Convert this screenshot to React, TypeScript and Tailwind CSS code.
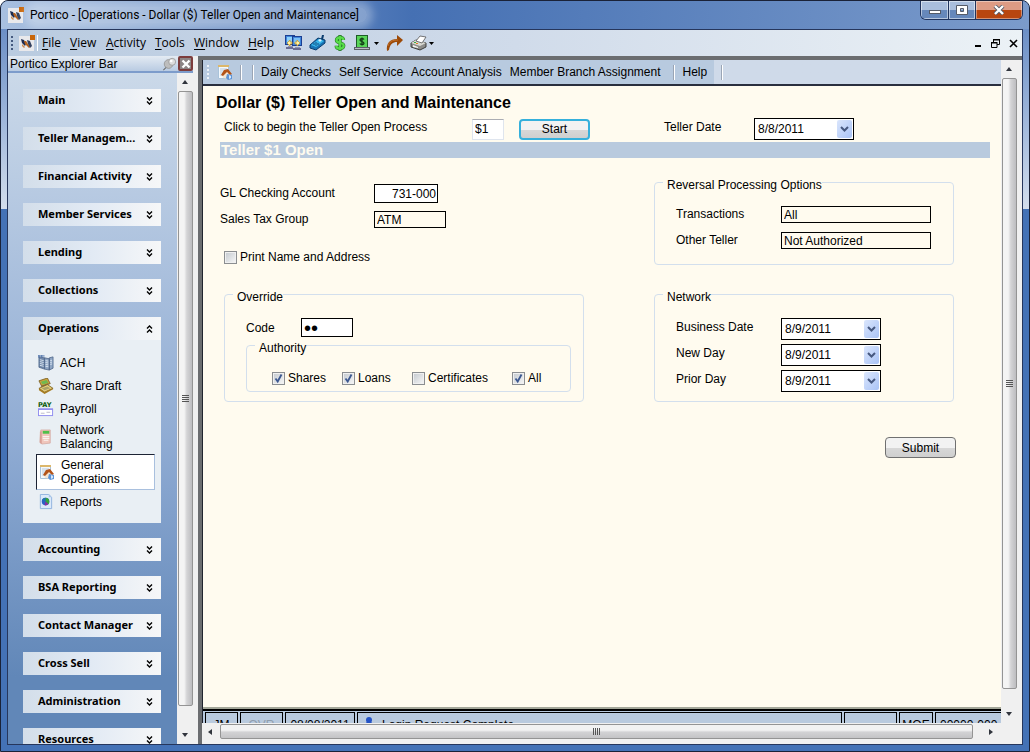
import React from 'react';

type IconProps = { className?: string };

const SECTIONS_ABOVE = ['Main', 'Teller Managem...', 'Financial Activity', 'Member Services', 'Lending', 'Collections'];
const SECTIONS_BELOW = ['Accounting', 'BSA Reporting', 'Contact Manager', 'Cross Sell', 'Administration', 'Resources'];

const LogoIcon: React.FC<IconProps> = ({ className }) => (
  <svg viewBox="0 0 16 16" className={className} aria-hidden="true">
    <rect x="0" y="1" width="15" height="15" fill="#e9e9ec" />
    <path d="M2 4l3 1 2 4-1 2-3-3z" fill="#1c2c52" />
    <path d="M5 6l2 0 4 6-1 1-4-4z" fill="#b4601c" />
    <path d="M8 5l3 1 2 5-2 2-2-4z" fill="#33415f" />
    <path d="M3 9l3 3-1 1-2-2z" fill="#c98a50" />
    <rect x="11" y="0" width="5" height="5" fill="#c8660a" />
  </svg>
);

const MonitorsIcon: React.FC<IconProps> = ({ className }) => (
  <svg viewBox="0 0 17 16" className={className} aria-hidden="true">
    <rect x="0.5" y="0.5" width="9" height="9" fill="#3f86dc" stroke="#1b3f92" />
    <rect x="2" y="2" width="6" height="5" fill="#8cd0fa" />
    <rect x="7.5" y="1.500" width="9" height="9" fill="#3f86dc" stroke="#1b3f92" />
    <rect x="9" y="3" width="6" height="5" fill="#7cc0f4" />
    <path d="M3 11h5v2H3zM10 12h5v2h-5z" fill="#8f93b5" />
    <path d="M1 12h7v2H1zM8 13h8v2H8z" fill="#6a6d94" />
    <path d="M2 8l3-3v2h2v2H5v2zM15 8l-3-3v2h-2v2h2v2z" fill="#fff3a8" stroke="#c9971e" strokeWidth="0.7" />
  </svg>
);

const PhoneIcon: React.FC<IconProps> = ({ className }) => (
  <svg viewBox="0 0 17 16" className={className} aria-hidden="true">
    <path d="M1 10l8-7 7 2v3l-9 7-6-2z" fill="#1673b4" stroke="#0b3d6e" />
    <path d="M2 10l8-6 5 2-8 6z" fill="#38b6ea" />
    <path d="M9 5l2-1 2 1-2 2z" fill="#d6f3ff" />
    <path d="M4 9l1-1 1 1-1 1zM6 10l1-1 1 1-1 1zM6 8l1-1 1 1-1 1zM8 9l1-1 1 1-1 1z" fill="#0e4a80" />
    <path d="M12 4l1-4h2l-1 5z" fill="#0b3d6e" />
  </svg>
);

const DollarIcon: React.FC<IconProps> = ({ className }) => (
  <svg viewBox="0 0 14 16" className={className} aria-hidden="true">
    <path
      d="M10.500 5C10.500 3 9 2.500 7 2.500S3.500 3.300 3.500 5.200 5 7.300 7 7.800s3.700 1 3.700 3-1.700 2.700-3.700 2.700-3.800-1-3.800-2.800M7 0v16"
      fill="none"
      stroke="#2a7d2c"
      strokeWidth="3.400"
    />
    <path
      d="M10.500 5C10.500 3 9 2.500 7 2.500S3.500 3.300 3.500 5.200 5 7.300 7 7.800s3.700 1 3.700 3-1.700 2.700-3.700 2.700-3.800-1-3.800-2.800M7 1v14"
      fill="none"
      stroke="#57dc48"
      strokeWidth="2.200"
    />
  </svg>
);

const CashIcon: React.FC<IconProps> = ({ className }) => (
  <svg viewBox="0 0 16 16" className={className} aria-hidden="true">
    <rect x="2" y="0" width="12" height="13" fill="#1d5c26" />
    <rect x="3" y="1" width="10" height="11" fill="#59d458" />
    <path d="M10 4.500C9.500 3.500 6 3 6 5c0 2 4 1 4 3.200 0 1.800-3.500 1.500-4.200.3M8 2.500v8" fill="none" stroke="#0d3312" strokeWidth="1.200" />
    <path d="M0 12h16v3H0z" fill="#5b5f66" />
    <path d="M1 13h14v1H1z" fill="#b9bdc4" />
  </svg>
);

const ForwardIcon: React.FC<IconProps> = ({ className }) => (
  <svg viewBox="0 0 17 16" className={className} aria-hidden="true">
    <path d="M1 16C0 8 4 4 11 4V0l6 5-6 6V7C7 7 4 9 3 15z" fill="#9c4a08" />
    <path d="M2 11c1-4 4-6 10-6" fill="none" stroke="#cd7a32" strokeWidth="0.800" />
  </svg>
);

const PrinterIcon: React.FC<IconProps> = ({ className }) => (
  <svg viewBox="0 0 17 16" className={className} aria-hidden="true">
    <path d="M1 8l5-3 10 3v4l-6 3-9-3z" fill="#8d8d8a" stroke="#33332f" strokeWidth="0.900" />
    <path d="M1 8l5-3 10 3-6 3z" fill="#d9d9d2" />
    <path d="M6 6l4-5 6 1-4 6z" fill="#fff" stroke="#555" strokeWidth="0.800" />
    <path d="M3 10l5 2v1l-5-1z" fill="#f6f6f0" />
    <path d="M4 7h2v1H4z" fill="#3fae3c" />
    <path d="M6 8h2v1H6z" fill="#e08020" />
  </svg>
);

const HouseDocIcon: React.FC<IconProps> = ({ className }) => (
  <svg viewBox="0 0 16 16" className={className} aria-hidden="true">
    <path d="M1.500 1.500h10v13h-10z" fill="#f4f8fc" stroke="#a9c3da" />
    <path d="M1 1h11v2H1z" fill="#dcb76a" />
    <path d="M3 5h7M3 7h5M3 9h3M3 11h2" stroke="#b9cbdc" />
    <path d="M5 11l4-4 5 4v4l-8-1z" fill="#f3e5d4" />
    <path d="M4 11l3-5 4-1 4 5-2 1-3-3-4 4z" fill="#b3541a" />
    <path d="M10 10l5 1v4l-4 1-2-2z" fill="#5d94d8" />
    <path d="M12 11l2 1v2l-2 1z" fill="#d5e7fa" />
  </svg>
);

const AchIcon: React.FC<IconProps> = ({ className }) => (
  <svg viewBox="0 0 17 17" className={className} aria-hidden="true">
    <path d="M1 2l6 1v12l-6-2z" fill="#6f87a8" stroke="#4a6186" strokeWidth="0.800" />
    <path d="M7 3l5 1v12l-5-1zM12 3l4-1v12l-4 2z" fill="#8fa6c4" stroke="#4a6186" strokeWidth="0.800" />
    <path d="M2 5l4 1M2 7l4 1M2 9l4 1M2 11l4 1M8 6l3 .5M8 8l3 .5M8 10l3 .5M8 12l3 .5M13 6l2-.5M13 8l2-.5M13 10l2-.5" stroke="#dbe5f1" />
    <path d="M0 1h7M1 0v3M4 0v3" stroke="#4a6fa5" />
  </svg>
);

const ShareDraftIcon: React.FC<IconProps> = ({ className }) => (
  <svg viewBox="0 0 17 17" className={className} aria-hidden="true">
    <path d="M1 3l9-3 3 6-9 3z" fill="#d0a23c" stroke="#6d5418" strokeWidth="0.800" />
    <path d="M3 4l6-2 2 3-6 2z" fill="#6fba50" />
    <path d="M1 11l9-4 6 4-9 4z" fill="#e8cf7a" stroke="#6d5418" strokeWidth="0.800" />
    <path d="M4 11l6-2 3 2-6 2z" fill="#a9a268" />
    <path d="M1 11v2l6 4 9-5v-1l-9 4z" fill="#a67c20" />
    <path d="M3 9l8-3" stroke="#7c6a3a" />
  </svg>
);

const PayrollIcon: React.FC<IconProps> = ({ className }) => (
  <svg viewBox="0 0 17 17" className={className} aria-hidden="true">
    <text x="0" y="6" fontSize="7" fontWeight="bold" fontFamily="DejaVu Sans" fill="#0b5a0b">PAY</text>
    <rect x="0.500" y="8.500" width="15" height="7" fill="#fff" stroke="#8f8cf0" />
    <path d="M0 8h16v1.500H0z" fill="#8f8cf0" />
    <path d="M3 13h4M9 12h4" stroke="#b9b9c9" />
  </svg>
);

const LedgerIcon: React.FC<IconProps> = ({ className }) => (
  <svg viewBox="0 0 17 17" className={className} aria-hidden="true">
    <path d="M3 1h10v14l-9 1-2-2z" fill="#f0c6bc" stroke="#cfa097" strokeWidth="0.700" />
    <path d="M5 2h7v3H5z" fill="#4fc04a" />
    <path d="M5 8h7M5 10h7M6 12h5" stroke="#faf3f0" strokeWidth="1.200" />
    <path d="M2 3l2-1v14l-2-1z" fill="#d9a097" />
  </svg>
);

const ReportsIcon: React.FC<IconProps> = ({ className }) => (
  <svg viewBox="0 0 17 17" className={className} aria-hidden="true">
    <path d="M2.500 0.500h9l3 3v12h-12z" fill="#dceafa" stroke="#8fb2de" />
    <path d="M11.500 0.500l3 3h-3z" fill="#a7c6ea" />
    <circle cx="8" cy="8" r="4" fill="#2c62c4" />
    <path d="M8 8V4a4 4 0 0 1 4 4 4 4 0 0 1-1 3z" fill="#37a53b" />
    <path d="M8 8l-3.500-2A4 4 0 0 1 8 4z" fill="#27a" />
    <path d="M8 8l3 3a4 4 0 0 1-4 1z" fill="#8d2fa0" />
  </svg>
);

const PinIcon: React.FC<IconProps> = ({ className }) => (
  <svg viewBox="0 0 16 16" className={className} aria-hidden="true">
    <path d="M1 15l4-4" stroke="#6b6b6b" strokeWidth="1.200" />
    <circle cx="7" cy="8" r="5" fill="#bdbdbd" stroke="#969696" />
    <circle cx="11" cy="5.500" r="4" fill="#dcdcdc" stroke="#9b9b9b" />
    <circle cx="10" cy="4.500" r="1.500" fill="#fff" />
  </svg>
);

const ITEMS = [
  { label: 'ACH', Icon: AchIcon },
  { label: 'Share Draft', Icon: ShareDraftIcon },
  { label: 'Payroll', Icon: PayrollIcon },
  { label: 'Network Balancing', Icon: LedgerIcon },
  { label: 'General Operations', Icon: HouseDocIcon, selected: true },
  { label: 'Reports', Icon: ReportsIcon },
];

const Chevrons: React.FC<{ up?: boolean }> = ({ up }) => (
  <svg viewBox="0 0 7 8" className={up ? 'h-2 w-[7px] rotate-180' : 'h-2 w-[7px]'} aria-hidden="true">
    <path d="M1 0.500l2.500 2.500L6 0.500M1 4.500L3.500 7 6 4.500" fill="none" stroke="#000" strokeWidth="1.400" />
  </svg>
);

const DropArrow = () => (
  <svg viewBox="0 0 5 3" className="h-[3px] w-[5px]" aria-hidden="true">
    <path d="M0 0h5L2.500 3z" fill="#000" />
  </svg>
);

const Grip: React.FC<{ className: string }> = ({ className }) => (
  <svg viewBox="0 0 2 14" className={`h-[14px] w-[2px] shrink-0 ${className}`} aria-hidden="true">
    <path d="M0 0h2v2H0zM0 4h2v2H0zM0 8h2v2H0zM0 12h2v2H0z" fill="currentColor" />
  </svg>
);

const Separator = () => <span className="h-[15px] w-[2px] shrink-0 border-l border-[#9aa5b5] bg-white" />;

const ScrollArrow: React.FC<{ d: string }> = ({ d }) => (
  <svg viewBox="0 0 8 8" className="h-2 w-2 shrink-0" aria-hidden="true">
    <path d={d} fill="#30343c" />
  </svg>
);

const VerticalScroll = () => (
  <div className="flex w-4 shrink-0 flex-col items-center bg-[#f0f0f0]">
    <div className="flex h-[18px] shrink-0 items-center"><ScrollArrow d="M1 6l3-4 3 4z" /></div>
    <div className="flex w-[15px] flex-1 flex-col items-center justify-center gap-px rounded-xs border border-[#949494] bg-linear-to-r from-[#f4f4f4] from-40% via-[#d4d4d6] via-60% to-[#bdbdc0]">
      <i className="h-px w-[7px] bg-[#555]" />
      <i className="h-px w-[7px] bg-[#555]" />
      <i className="h-px w-[7px] bg-[#555]" />
      <i className="h-px w-[7px] bg-[#555]" />
    </div>
  </div>
);

const SectionHeader: React.FC<{ label: string; open?: boolean }> = ({ label, open }) => (
  <button
    type="button"
    className="flex h-[23px] w-full shrink-0 items-center justify-between bg-linear-to-r from-[#d3deea] via-[#e2eaf4] to-[#f6f7f8] pr-2 pl-[15px] text-left font-['Noto_Sans'] text-[11px] font-bold"
  >
    {label}
    <Chevrons up={open} />
  </button>
);

const ExplorerBar = () => (
  <aside className="flex w-[185px] shrink-0 flex-col">
    <div className="flex h-[17px] shrink-0 items-center border-b-2 border-[#7d9ccb] bg-linear-to-b from-[#e4ebf3] to-[#b9cbe2] pl-0.5 text-xs">
      <span className="flex-1">Portico Explorer Bar</span>
      <PinIcon className="mr-px h-[14px] w-[15px]" />
      <button type="button" aria-label="Close explorer bar" className="flex h-[15px] w-[15px] items-center justify-center rounded-xs border-2 border-[#7c3c3c] bg-[#8c8484]">
        <svg viewBox="0 0 10 10" className="h-[10px] w-[10px]" aria-hidden="true">
          <path d="M1.500 1.500l7 7M8.500 1.500l-7 7" stroke="#fff" strokeWidth="2.400" />
        </svg>
      </button>
    </div>
    <div className="flex min-h-0 flex-1">
      <nav className="flex flex-1 flex-col gap-[15px] overflow-hidden bg-linear-to-b from-[#cbd9e9] via-[#8fabd3] via-55% to-[#6187b8] to-90% pt-4 pr-4 pl-[15px]">
        {SECTIONS_ABOVE.map((label) => (
          <SectionHeader key={label} label={label} />
        ))}
        <div className="shrink-0">
          <SectionHeader label="Operations" open />
          <ul className="bg-[#e9eff4] px-[13px] pt-[11px] pb-2.5">
            {ITEMS.map(({ label, Icon, selected }) => (
              <li key={label}>
                <a
                  href="#"
                  className={
                    selected
                      ? 'mr-[-7px] flex min-h-9 items-center gap-1.5 border border-[#a9c0de] border-t-[#1c2334] border-l-[#1c2334] bg-white pr-5 pl-0.5 leading-[14px]'
                      : 'flex min-h-[23px] items-center gap-1.5 py-[3px] pr-4 pl-0.5 leading-[14px]'
                  }
                >
                  <Icon className="h-4 w-4 shrink-0" />
                  {label}
                </a>
              </li>
            ))}
          </ul>
        </div>
        {SECTIONS_BELOW.map((label) => (
          <SectionHeader key={label} label={label} />
        ))}
      </nav>
      <div className="flex flex-col bg-[#f0f0f0]">
        <div className="flex min-h-0 flex-1"><VerticalScroll /></div>
        <div className="flex h-[38px] items-center justify-center pt-5"><ScrollArrow d="M1 2h6L4 6z" /></div>
      </div>
    </div>
  </aside>
);

const CheckField: React.FC<{ label: string; checked?: boolean; className?: string }> = ({ label, checked, className = '' }) => (
  <label className={`flex items-center gap-[3px] ${className}`}>
    <span className="relative flex">
      <input
        type="checkbox"
        defaultChecked={checked}
        className="peer h-[13px] w-[13px] appearance-none border border-[#8b8e91] bg-linear-to-br from-[#c3c8ce] to-[#f8f8f8] shadow-[inset_0_0_0_1px_#f0f0f0]"
      />
      <svg viewBox="0 0 13 13" className="pointer-events-none invisible absolute inset-0 h-[13px] w-[13px] peer-checked:visible" aria-hidden="true">
        <path d="M3.500 6.500l2.200 3L9.500 2.500" fill="none" stroke="#3c5890" strokeWidth="1.800" />
      </svg>
    </span>
    {label}
  </label>
);

const DateSelect: React.FC<{ id: string; value: string }> = ({ id, value }) => (
  <span className="relative flex w-[100px]">
    <select id={id} className="h-[22px] w-full appearance-none border border-black bg-white pl-[3px]">
      <option>{value}</option>
    </select>
    <span className="pointer-events-none absolute top-0.5 right-0.5 flex h-[18px] w-[15px] items-center justify-center rounded-xs bg-linear-to-br from-[#dbe6fc] to-[#a9c3f6]">
      <svg viewBox="0 0 9 6" className="h-1.5 w-[9px]" aria-hidden="true">
        <path d="M1 1l3.500 3.500L8 1" fill="none" stroke="#46587f" strokeWidth="2" />
      </svg>
    </span>
  </span>
);

const Group: React.FC<{ title: string; className?: string; children: React.ReactNode }> = ({ title, className = '', children }) => (
  <fieldset className={`rounded-sm border border-[#d3dfed] ${className}`}>
    <legend className="ml-2 pt-[5px] pl-1 leading-3">{title}</legend>
    {children}
  </fieldset>
);

const TellerForm = () => (
  <form className="flex-1 overflow-hidden bg-[#fffbef] pt-[7px]" onSubmit={(e) => e.preventDefault()}>
    <h1 className="pl-[13px] text-base leading-5 font-bold">Dollar ($) Teller Open and Maintenance</h1>
    <div className="mb-px flex h-7 items-center pt-1 pl-[21px]">
      <label htmlFor="process" className="w-[248px] pb-1">Click to begin the Teller Open Process</label>
      <input id="process" defaultValue="$1" className="h-[21px] w-8 border border-[#dfe5ee] border-t-[#abadb3] bg-white px-0.5" />
      <button type="submit" className="ml-[15px] h-[21px] w-[71px] rounded-sm border-2 border-[#35b0dc] bg-linear-to-b from-[#f2f2f2] from-50% via-[#d8d8d8] via-50% to-[#cfcfcf]">
        Start
      </button>
      <label htmlFor="teller-date" className="ml-[74px] w-[90px] pb-1">Teller Date</label>
      <DateSelect id="teller-date" value="8/8/2011" />
    </div>
    <h2 className="mr-[11px] ml-[17px] h-4 bg-[#b9cade] pl-px text-[15px] leading-4 font-bold text-[#fffbef]">Teller $1 Open</h2>
    <div className="grid grid-cols-[434px_300px] pt-4 pl-[17px]">
      <div className="flex flex-col pt-1.5">
        <div className="flex h-[26px] items-center">
          <label htmlFor="gl" className="w-[154px]">GL Checking Account</label>
          <input id="gl" defaultValue="731-000" className="h-[19px] w-16 border border-black bg-white pt-0.5 pr-px text-right" />
        </div>
        <div className="flex h-[26px] items-center">
          <label htmlFor="tax" className="w-[154px]">Sales Tax Group</label>
          <input id="tax" defaultValue="ATM" className="h-[17px] w-[72px] border border-black bg-transparent px-0.5 pt-0.5" />
        </div>
        <CheckField label="Print Name and Address" className="mt-[17px] h-4 pl-1" />
        <Group title="Override" className="mt-[21px] ml-1 h-[116px] w-[360px]">
          <div className="mt-[15px] flex h-[19px] items-center pl-[21px]">
            <label htmlFor="code" className="w-[55px]">Code</label>
            <input id="code" type="password" defaultValue="12" className="h-[19px] w-[52px] border border-black bg-white px-0.5 text-xl" />
          </div>
          <Group title="Authority" className="mr-3 ml-[21px] h-[55px]">
            <div className="flex pt-4 pl-[25px]">
              <CheckField label="Shares" checked className="w-[70px]" />
              <CheckField label="Loans" checked className="w-[70px]" />
              <CheckField label="Certificates" className="w-[100px]" />
              <CheckField label="All" checked />
            </div>
          </Group>
        </Group>
      </div>
      <div className="flex flex-col">
        <Group title="Reversal Processing Options" className="h-[91px]">
          <div className="mt-2.5 flex h-[26px] items-center pl-[21px]">
            <label htmlFor="transactions" className="w-[105px]">Transactions</label>
            <input id="transactions" defaultValue="All" className="h-[17px] w-[150px] border border-black bg-transparent px-0.5 pt-0.5" />
          </div>
          <div className="flex h-[26px] items-center pl-[21px]">
            <label htmlFor="other-teller" className="w-[105px]">Other Teller</label>
            <input id="other-teller" defaultValue="Not Authorized" className="h-[17px] w-[150px] border border-black bg-transparent px-0.5 pt-0.5" />
          </div>
        </Group>
        <Group title="Network" className="mt-[21px] h-[116px]">
          <div className="mt-[15px] flex flex-col gap-1 pl-[21px]">
            <div className="flex items-center">
              <label htmlFor="business-date" className="w-[105px] pb-1">Business Date</label>
              <DateSelect id="business-date" value="8/9/2011" />
            </div>
            <div className="flex items-center">
              <label htmlFor="new-day" className="w-[105px] pb-1">New Day</label>
              <DateSelect id="new-day" value="8/9/2011" />
            </div>
            <div className="flex items-center">
              <label htmlFor="prior-day" className="w-[105px] pb-1">Prior Day</label>
              <DateSelect id="prior-day" value="8/9/2011" />
            </div>
          </div>
        </Group>
        <button type="button" className="mt-[35px] ml-[231px] h-[21px] w-[71px] rounded-sm border border-[#707070] bg-linear-to-b from-[#f2f2f2] from-50% via-[#d8d8d8] via-50% to-[#cfcfcf]">
          Submit
        </button>
      </div>
    </div>
  </form>
);

const StatusBar = () => (
  <div className="flex h-[14px] shrink-0 gap-0.5 overflow-hidden border-t-2 border-black bg-[#b9cade] pt-px pl-0.5 text-xs leading-4 whitespace-nowrap">
    <span className="h-6 w-[33px] shrink-0 border border-black pt-1 text-center">JM</span>
    <span className="h-6 w-[43px] shrink-0 border border-black pt-1 text-center text-[#8f9dad]">OVR</span>
    <span className="h-6 w-[70px] shrink-0 border border-black pt-1 text-center">08/08/2011</span>
    <span className="flex h-6 flex-1 gap-2 border border-black pt-1 pl-1.5">
      <svg viewBox="0 0 10 14" className="h-[14px] w-[10px]" aria-hidden="true">
        <circle cx="5" cy="3" r="3" fill="#2453c6" />
        <path d="M0 12c0-10 10-10 10 0z" fill="#2453c6" />
      </svg>
      Login Request Complete
    </span>
    <span className="h-6 w-[53px] shrink-0 border border-black" />
    <span className="h-6 w-[34px] shrink-0 border border-black pt-1 text-center">MOE</span>
    <span className="h-6 w-[66px] shrink-0 border border-r-0 border-black pt-1 pl-1">00000-000</span>
  </div>
);

const TitleBar = () => (
  <header className="flex h-7 shrink-0 items-start bg-linear-to-r from-[#a9c0e0] via-[#4570b3] via-40% to-[#7b9bcb] pl-[7px]">
    <div className="flex h-7 flex-1 items-center gap-1.5 font-['Roboto'] text-xs">
      <LogoIcon className="h-4 w-4" />
      <span className="rounded-full bg-white/30 pr-2 shadow-[0_0_8px_6px_rgba(255,255,255,0.3)]">
        Portico - [Operations - Dollar ($) Teller Open and Maintenance]
      </span>
    </div>
    <div className="mr-1.5 flex h-[19px] overflow-hidden rounded-b-md border border-t-0 border-[#20345e]">
      <button type="button" aria-label="Minimize" className="flex w-7 items-center justify-center border-r border-[#20345e] bg-linear-to-b from-[#a9bedd] from-50% to-[#6688bb] to-50% shadow-[inset_0_0_0_1px_rgba(255,255,255,0.5)]">
        <svg viewBox="0 0 12 10" className="h-[10px] w-3" aria-hidden="true">
          <rect x="0.500" y="5.500" width="11" height="3" fill="#fff" stroke="#555b68" />
        </svg>
      </button>
      <button type="button" aria-label="Maximize" className="flex w-[27px] items-center justify-center border-r border-[#20345e] bg-linear-to-b from-[#a9bedd] from-50% to-[#6688bb] to-50% shadow-[inset_0_0_0_1px_rgba(255,255,255,0.5)]">
        <svg viewBox="0 0 12 10" className="h-[10px] w-3" aria-hidden="true">
          <path d="M0.500 0.500h11v9H.5zM4.500 3.500v3h3v-3z" fill="#fff" fillRule="evenodd" stroke="#555b68" />
        </svg>
      </button>
      <button type="button" aria-label="Close" className="flex w-[46px] items-center justify-center bg-linear-to-b from-[#dd9b84] from-50% to-[#b8460f] to-50% shadow-[inset_0_0_0_1px_rgba(255,255,255,0.4)]">
        <svg viewBox="0 0 12 10" className="h-[10px] w-3" aria-hidden="true">
          <path d="M2 1l8 8M10 1L2 9" stroke="#555b68" strokeWidth="4" />
          <path d="M2 1l8 8M10 1L2 9" stroke="#fff" strokeWidth="2.400" />
        </svg>
      </button>
    </div>
  </header>
);

const MENUS = [
  { key: 'F', rest: 'ile', className: 'w-7' },
  { key: 'V', rest: 'iew', className: 'w-9' },
  { key: 'A', rest: 'ctivity', className: 'w-[49px]' },
  { key: 'T', rest: 'ools', className: 'w-[39px]' },
  { key: 'W', rest: 'indow', className: 'w-[54px]' },
  { key: 'H', rest: 'elp', className: 'w-[37px]' },
];

const MenuBar = () => (
  <div className="flex h-[26px] shrink-0 items-center bg-linear-to-r from-[#b9cbe0] via-[#d0dbea] via-50% to-[#ecf2f6] pr-1 pl-[3px]">
    <Grip className="text-[#44597e]" />
    <LogoIcon className="mr-0.5 ml-1.5 h-4 w-4" />
    <span className="mr-1 h-4 w-px bg-white" />
    {MENUS.map(({ key, rest, className }) => (
      <button key={key} type="button" className={`text-left font-['Open_Sans'] text-xs ${className}`}>
        <span className="underline underline-offset-2">{key}</span>
        {rest}
      </button>
    ))}
    <div className="flex flex-1 items-center gap-[7px]">
      <button type="button" aria-label="Connect"><MonitorsIcon className="h-4 w-[17px]" /></button>
      <button type="button" aria-label="Call"><PhoneIcon className="h-4 w-[17px]" /></button>
      <button type="button" aria-label="Money"><DollarIcon className="h-4 w-[14px]" /></button>
      <button type="button" aria-label="Cash" className="flex items-center gap-1"><CashIcon className="h-4 w-4" /><DropArrow /></button>
      <button type="button" aria-label="Forward"><ForwardIcon className="h-4 w-[17px]" /></button>
      <button type="button" aria-label="Print" className="flex items-center gap-0.5"><PrinterIcon className="h-4 w-[17px]" /><DropArrow /></button>
    </div>
    <div className="flex items-center gap-[9px]">
      <button type="button" aria-label="Minimize document">
        <svg viewBox="0 0 8 10" className="h-[10px] w-2" aria-hidden="true"><path d="M1 7h6v2H1z" /></svg>
      </button>
      <button type="button" aria-label="Restore document">
        <svg viewBox="0 0 9 9" className="h-[9px] w-[9px]" aria-hidden="true">
          <path d="M2.500 3V1h6v4.500H6M2 .5h7M.5 4v4.500h5.500V4zM0 3.500h6.500" fill="none" stroke="#000" />
        </svg>
      </button>
      <button type="button" aria-label="Close document">
        <svg viewBox="0 0 9 9" className="h-[9px] w-[9px]" aria-hidden="true"><path d="M1 1l7 7M8 1L1 8" stroke="#000" strokeWidth="1.600" /></svg>
      </button>
    </div>
  </div>
);

const FormToolbar = () => (
  <div className="flex h-[26px] shrink-0 items-center border-b-2 border-[#2a2f3e] bg-linear-to-r from-[#b8cadf] from-64% to-[#cfdae9] to-64% pl-1 whitespace-nowrap">
    <Grip className="text-[#eef3f8]" />
    <HouseDocIcon className="mr-[7px] ml-2 h-4 w-4" />
    <Separator />
    <span className="w-2.5" />
    <Separator />
    <div className="flex gap-2 pr-3 pl-[7px]">
      <button type="button">Daily Checks</button>
      <button type="button">Self Service</button>
      <button type="button">Account Analysis</button>
      <button type="button">Member Branch Assignment</button>
    </div>
    <Separator />
    <button type="button" className="pr-3.5 pl-2">Help</button>
    <Separator />
  </div>
);

const App: React.FC = () => (
  <div className="flex h-screen flex-col overflow-hidden rounded-t-lg border border-[#1a2238] bg-[#4472b6] font-['Liberation_Sans',sans-serif] text-xs text-black">
    <TitleBar />
    <div className="flex min-h-0 flex-1 bg-linear-to-b from-[#6c8fc6] via-[#d3deed] via-25% to-[#4472b6] to-25% px-1.5 pb-1.5">
      <div className="flex min-w-0 flex-1 flex-col border border-[#26365c] bg-[#f0f0f0]">
        <MenuBar />
        <div className="flex min-h-0 flex-1">
          <ExplorerBar />
          <div className="ml-[5px] flex min-w-0 flex-1 flex-col border-t-4 border-l-4 border-[#6b6d70] pr-[5px] pb-1">
            <div className="flex min-h-0 flex-1">
              <main className="flex min-w-0 flex-1 flex-col border-l border-[#20242e]">
                <FormToolbar />
                <TellerForm />
                <div className="h-0.5 shrink-0 bg-[#a3a698]" />
                <StatusBar />
              </main>
              <div className="flex flex-col bg-[#f0f0f0]">
                <div className="flex min-h-0 flex-1"><VerticalScroll /></div>
                <div className="flex h-[34px] items-center justify-center pt-4"><ScrollArrow d="M1 2h6L4 6z" /></div>
              </div>
            </div>
            <div className="flex h-[17px] shrink-0 items-center bg-[#f0f0f0] pr-[22px] pl-1">
              <ScrollArrow d="M6 1L2 4l4 3z" />
              <div className="mr-3.5 ml-1.5 flex h-[15px] flex-1 items-center justify-center gap-px rounded-xs border border-[#949494] bg-linear-to-b from-[#f2f2f2] from-40% via-[#d2d2d4] via-55% to-[#c4c4c6]">
                <i className="h-[7px] w-px bg-[#555]" />
                <i className="h-[7px] w-px bg-[#555]" />
                <i className="h-[7px] w-px bg-[#555]" />
                <i className="h-[7px] w-px bg-[#555]" />
              </div>
              <ScrollArrow d="M2 1l4 3-4 3z" />
            </div>
          </div>
        </div>
      </div>
    </div>
  </div>
);

export default App;
